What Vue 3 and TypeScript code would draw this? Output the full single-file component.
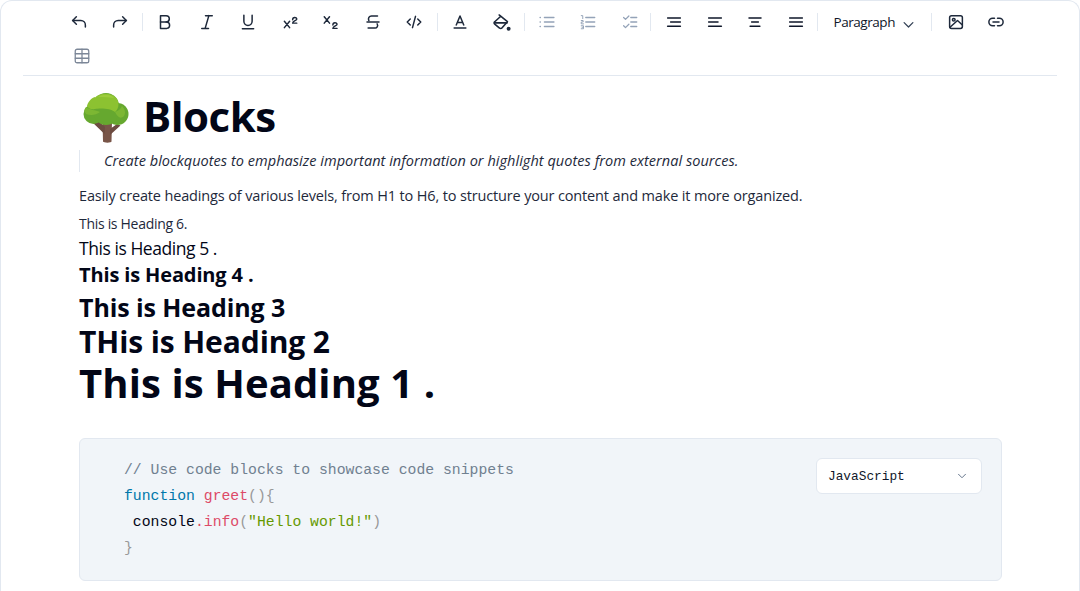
<script setup lang="ts">
const code = [
  { id: 1, parts: [{ t: '// Use code blocks to showcase code snippets', c: 'comment' }] },
  { id: 2, parts: [{ t: 'function', c: 'kw' }, { t: ' ', c: '' }, { t: 'greet', c: 'fn' }, { t: '(){', c: 'punct' }] },
  { id: 3, parts: [{ t: ' console', c: 'plain' }, { t: '.', c: 'fn' }, { t: 'info', c: 'fn' }, { t: '(', c: 'punct' }, { t: '"Hello world!"', c: 'str' }, { t: ')', c: 'punct' }] },
  { id: 4, parts: [{ t: '}', c: 'punct' }] },
]
</script>

<template>
  <div class="editor">
    <div class="toolbar">
      <button class="tb"><svg viewBox="0 0 24 24"><path d="M8.500 15 3.500 10l5-5" /><path d="M3.500 10h11a6 6 0 0 1 6 6v2.500" /></svg></button>
      <button class="tb"><svg viewBox="0 0 24 24"><path d="m15.500 15 5-5-5-5" /><path d="M20.500 10h-11a6 6 0 0 0-6 6v2.500" /></svg></button>
      <span class="sep"></span>
      <button class="tb"><svg viewBox="0 0 24 24"><path d="M6 3.500h7.500a4.200 4.200 0 0 1 0 8.500H6z" /><path d="M13.500 12h1a4.300 4.300 0 0 1 0 8.500H6V12" /></svg></button>
      <button class="tb"><svg viewBox="0 0 24 24"><path d="M10 3.500h9M5 20.500h9M14.500 3.500 9.500 20.500" /></svg></button>
      <button class="tb"><svg viewBox="0 0 24 24"><path d="M6.500 3v8a5.500 5.500 0 0 0 11 0V3" /><path d="M4.500 21h15" /></svg></button>
      <button class="tb"><svg viewBox="0 0 24 24"><path d="m4.500 11 7 8.500M11.500 11l-7 8.500" /><path class="thin" d="M15.500 9c0-3.800 5.500-3.800 5.500-.8 0 2-5.500 2.300-5.500 5.300H21" /></svg></button>
      <button class="tb"><svg viewBox="0 0 24 24"><path d="m3 5 7 8.500M10 5l-7 8.500" /><path class="thin" d="M14.500 16c0-3.800 5.500-3.800 5.500-.8 0 2-5.500 2.300-5.500 5.300H20" /></svg></button>
      <button class="tb"><svg viewBox="0 0 24 24"><path d="M4 12h16" /><path d="M18 4H10a4 4 0 0 0-3.500 6" /><path d="M17.500 14.500A3.500 3.500 0 0 1 14 20H5.500" /></svg></button>
      <button class="tb code-btn"><svg viewBox="0 0 24 24"><path d="M7 8l-4 4 4 4M17 8l4 4-4 4M14 4.500 10 19.500" /></svg></button>
      <span class="sep"></span>
      <button class="tb"><svg viewBox="0 0 24 24"><path d="M7 16 12 4l5 12M8.500 12.500h7M4.200 20h15.600" /></svg></button>
      <button class="tb wide"><svg viewBox="0 0 24 24"><path d="M9 2.500 19.500 11 12.500 19a2 2 0 0 1-3 0l-6-5a2 2 0 0 1 0-3l6.500-6" /><path d="M3 12.500h16" /><circle class="solid" cx="21" cy="20" r="2.500" /></svg></button>
      <span class="sep"></span>
      <button class="tb muted"><svg viewBox="0 0 24 24"><path d="M8.500 6h12.800M8.500 12h12.800M8.500 18h12.800M2.700 6h.5M2.700 12h.5M2.700 18h.5" /></svg></button>
      <button class="tb muted"><svg viewBox="0 0 24 24"><path d="M9 6h12M9 12h12M9 18h12" /><path class="num" d="M3 3.500h2v4M3 10h2.500v2H3v2.500h3M3 17h3v4H3M4 19h2" /></svg></button>
      <button class="tb muted"><svg viewBox="0 0 24 24"><path d="M13 6h8M13 12h8M13 18h8M3.500 6l2.500 2.500L10.500 4M3.500 17l2.500 2.500L10.500 15" /></svg></button>
      <span class="sep sep-shift"></span>
      <button class="tb strong"><svg viewBox="0 0 24 24"><path d="M3.500 6.500h17M7.500 12h13M3.500 17.500h17" /></svg></button>
      <button class="tb strong"><svg viewBox="0 0 24 24"><path d="M3.500 6.500h17M3.500 12h12.500M3.500 17.500h17" /></svg></button>
      <button class="tb strong"><svg viewBox="0 0 24 24"><path d="M4 6.500h16M7.500 12h9M5.500 17.500h13" /></svg></button>
      <button class="tb strong"><svg viewBox="0 0 24 24"><path d="M3.500 6.500h17M3.500 12h17M3.500 17.500h17" /></svg></button>
      <span class="sep"></span>
      <div class="para">
        <span>Paragraph</span>
        <svg viewBox="0 0 24 24"><path d="m5 9 7 7 7-7" /></svg>
      </div>
      <span class="sep"></span>
      <button class="tb image"><svg viewBox="0 0 24 24"><rect x="3.500" y="3.500" width="17" height="17" rx="2.500" /><circle cx="9" cy="9" r="1.800" /><path d="m4 19 10-9 6.500 6" /></svg></button>
      <button class="tb link"><svg viewBox="0 0 24 24"><path d="M10 7H7.500a5 5 0 0 0 0 10H10M14 7h2.500a5 5 0 0 1 0 10H14M8 12h8" /></svg></button>
      <button class="tb muted table"><svg viewBox="0 0 24 24"><rect x="3" y="3" width="18" height="18" rx="2.500" /><path d="M3 9h18M3 15h18M12 3v18" /></svg></button>
    </div>

    <div class="body">
      <h1 class="title">
        <svg class="tree" viewBox="0 0 52 52">
          <path fill="#795548" d="M23.500 30h9.500l-.5 19.500c0 1.500-8 1.500-8.500 0z" />
          <path fill="#6d4c41" d="m12 29 5-3 9 9-.5 7zM38 32l3.500 1.500L31 43v-6z" />
          <g fill="#66a82f">
            <circle cx="27" cy="14" r="13" />
            <circle cx="14.500" cy="22" r="10" />
            <circle cx="38.500" cy="22" r="11" />
            <circle cx="27" cy="21" r="12" />
          </g>
          <path fill="#8cc231" d="M16 5.500C20 .5 34 0 38 7c3 5 1 11-2 13-4-4-16-4-20-3-4 1-7-1-8-3 1-4 4-8 8-9z" />
          <path fill="#9ccc3c" d="M19 5c4-3 13-3 16 1-5-1-11-1-16-1z" />
          <path fill="#7cb733" d="M7 15c4 3 9 3 14 5-4 3-9 4-14 2-2-2-2-5 0-7zM36 20c3-1 6-3 7-6 3 3 4 7 2 10-3 3-6 2-9-4z" />
        </svg>
        <span class="title-text">Blocks</span>
      </h1>
      <blockquote class="quote">Create blockquotes to emphasize important information or highlight quotes from external sources.</blockquote>
      <p class="para-text">Easily create headings of various levels, from H1 to H6, to structure your content and make it more organized.</p>
      <h6 class="h6">This is Heading 6.</h6>
      <h5 class="h5">This is Heading 5 .</h5>
      <h4 class="h4">This is Heading 4 .</h4>
      <h3 class="h3">This is Heading 3</h3>
      <h2 class="h2">THis is Heading 2</h2>
      <h1 class="h1">This is Heading 1 .</h1>

      <div class="code">
        <pre class="lines"><div v-for="line in code" :key="line.id" class="line"><span v-for="(p, i) in line.parts" :key="i" :class="p.c">{{ p.t }}</span></div></pre>
        <div class="lang">
          <span>JavaScript</span>
          <svg viewBox="0 0 24 24"><path d="m6 9 6 6 6-6" /></svg>
        </div>
      </div>
    </div>
  </div>
</template>

<style>
html, body { margin: 0; background: #fff; overflow: hidden; }
</style>

<style scoped>
.editor {
  box-sizing: border-box;
  width: 1080px;
  height: 591px;
  border: 1px solid #e2e8f0;
  border-bottom: 0;
  border-radius: 12px 12px 0 0;
  overflow: hidden;
  background: #fff;
  font-family: "Open Sans", sans-serif;
  color: #020617;
}
.toolbar {
  display: flex;
  flex-wrap: wrap;
  align-items: center;
  height: 75px;
  align-content: flex-start;
  margin: 0 22px;
  padding: 4px 0 0 35px;
  box-sizing: border-box;
  border-bottom: 1px solid #e2e8f0;
  width: 1034px;
}
.tb {
  width: 41.500px;
  height: 34px;
  padding: 0;
  border: 0;
  background: none;
  display: flex;
  align-items: center;
  justify-content: center;
  color: #1e293b;
}
.tb svg { width: 18px; height: 18px; stroke-width: 2; }
.tb.wide svg { width: 19px; height: 19px; }
.tb.muted { color: #94a3b8; }
.tb.strong { color: #0f172a; width: 40.500px; }
.tb.code-btn { margin-right: 1px; }
.tb.image { margin-left: 2px; }
.tb.link { width: 38.500px; }
.tb.table { margin-left: 3.500px; color: #7c8798; }
svg { fill: none; stroke: currentColor; stroke-width: 2; stroke-linecap: round; stroke-linejoin: round; }
.tb.muted svg { stroke-width: 1.700; }
.thin { stroke-width: 1.900; }
.num { stroke-width: 1.300; }
.solid { fill: currentColor; stroke: none; }
.sep {
  width: 1px;
  height: 18px;
  background: #e2e8f0;
  margin: 0 1.250px;
}
.sep-shift { margin: 0 3.250px 0 -.75px; }
.para {
  display: flex;
  align-items: center;
  width: 110px;
  box-sizing: border-box;
  padding-left: 14px;
  font-size: 13.500px;
  letter-spacing: -.45px;
  color: #0f172a;
  gap: 6px;
}
.para svg { width: 15px; height: 15px; margin-top: 5px; color: #334155; flex: none; }
.body { padding: 0 78px; }
.title {
  display: flex;
  align-items: center;
  gap: 12px;
  margin: 15px 0 0;
  height: 52px;
  font-size: 42px;
  font-weight: 700;
  line-height: 52px;
  letter-spacing: -.5px;
}
.title-text { position: relative; top: -1px; }
.tree { width: 52px; height: 52px; stroke: none; flex: none; margin-top: 2px; }
.quote {
  margin: 7px 0 0;
  height: 22px;
  line-height: 22px;
  padding-left: 24px;
  border-left: 1px solid #e2e8f0;
  font-size: 14.500px;
  letter-spacing: .04px;
  font-style: italic;
  color: #1e293b;
}
.para-text { margin: 13px 0 0; font-size: 14.500px; letter-spacing: -.147px; line-height: 22px; color: #1e293b; }
h1, h2, h3, h4, h5, h6 { margin: 0; }
.h6 { margin-top: 6px; font-size: 14px; line-height: 22px; font-weight: 400; color: #1e293b; letter-spacing: -.3px; }
.h5 { margin-top: 1px; font-size: 17.500px; line-height: 25px; font-weight: 400; letter-spacing: -.45px; }
.h4 { margin-top: 0; font-size: 20px; line-height: 28px; font-weight: 700; letter-spacing: -.14px; }
.h3 { margin-top: 1px; font-size: 25px; line-height: 34px; font-weight: 700; letter-spacing: -.1px; }
.h2 { font-size: 30px; line-height: 36px; font-weight: 700; letter-spacing: -.1px; }
.h1 { margin-top: 0; font-size: 40px; line-height: 46px; font-weight: 700; letter-spacing: .1px; }
.code {
  display: flex;
  justify-content: space-between;
  box-sizing: border-box;
  width: 923px;
  height: 143px;
  margin-top: 32px;
  padding: 19px 19px 0 44px;
  border: 1px solid #e2e8f0;
  border-radius: 6px;
  background: #f1f5f9;
}
.lines { margin: -1px 0 0; font-family: "Liberation Mono", monospace; font-size: 14.770px; line-height: 26px; }
.line { height: 26px; }
.comment { color: #708090; }
.kw { color: #0077aa; }
.fn { color: #dd4a68; }
.punct { color: #999; }
.plain { color: #020617; }
.str { color: #669900; }
.lang {
  display: flex;
  align-items: center;
  justify-content: space-between;
  box-sizing: border-box;
  width: 166px;
  height: 36px;
  padding: 0 12px 0 11px;
  background: #fff;
  border: 1px solid #e2e8f0;
  border-radius: 6px;
  font-family: "Liberation Mono", monospace;
  font-size: 12.800px;
  color: #0f172a;
}
.lang svg { width: 14px; height: 14px; color: #64748b; stroke-width: 1.700; }
</style>
